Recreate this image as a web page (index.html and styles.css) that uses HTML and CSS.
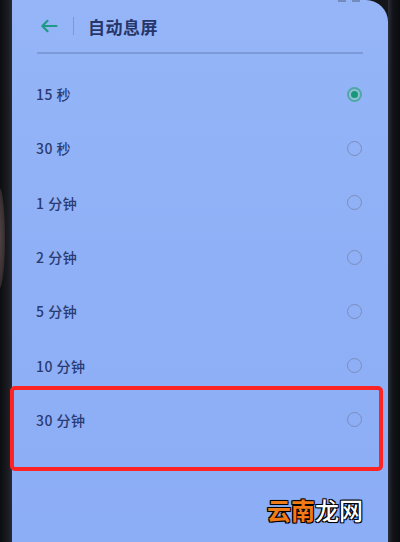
FILE: index.html
```html
<!DOCTYPE html>
<html lang="zh">
<head>
<meta charset="utf-8">
<link rel="stylesheet" href="styles.css">
</head>
<body>
<div class="device">
  <div class="bezel bezel-left"><div class="finger"></div></div>
  <div class="screen">
    <div class="statusbar"><span class="sb-dot"></span><span class="sb-dot"></span></div>
    <header class="header">
      <svg class="back" width="18" height="14" viewBox="0 0 18 14"><path d="M16.5 7H2.5M7.5 1.8L2.3 7l5.2 5.2" fill="none" stroke="#1f9a86" stroke-width="2.2" stroke-linecap="round" stroke-linejoin="round"/></svg>
      <span class="sep"></span>
      <h1 class="title">自动息屏</h1>
    </header>
    <div class="divider"></div>
    <ul class="list">
      <li class="row"><span class="label">15 秒</span><span class="radio checked"></span></li>
      <li class="row"><span class="label">30 秒</span><span class="radio"></span></li>
      <li class="row"><span class="label">1 分钟</span><span class="radio"></span></li>
      <li class="row"><span class="label">2 分钟</span><span class="radio"></span></li>
      <li class="row"><span class="label">5 分钟</span><span class="radio"></span></li>
      <li class="row"><span class="label">10 分钟</span><span class="radio"></span></li>
      <li class="row"><span class="label">30 分钟</span><span class="radio"></span></li>
    </ul>
  </div>
  <div class="bezel bezel-right"></div>
  <div class="highlight"></div>
  <div class="watermark"><span class="wm-orange">云南</span><span class="wm-white">龙网</span></div>
</div>
</body>
</html>
```
FILE: styles.css
```css
* { box-sizing: border-box; }
html, body { margin: 0; padding: 0; }
body {
  width: 400px;
  height: 542px;
  overflow: hidden;
  background: #15161a;
  font-family: "Noto Sans CJK SC", "Noto Sans", sans-serif;
}
.device {
  position: relative;
  display: flex;
  width: 400px;
  height: 542px;
}
.bezel { background: #141519; flex: none; position: relative; overflow: hidden; }
.bezel-left {
  width: 12px;
  background: linear-gradient(90deg, #0c0d10 0%, #1c1d22 70%, #2a2c34 100%);
}
.finger {
  position: absolute;
  left: -6px;
  top: 188px;
  width: 11px;
  height: 100px;
  border-radius: 50%;
  background: radial-gradient(ellipse at 30% 50%, #5a4a4a 0%, #3c3234 60%, #1c1d22 100%);
}
.bezel-right {
  width: 12px;
  background: linear-gradient(90deg, #2b2e3a 0%, #121318 40%, #0b0c0e 100%);
}
.screen {
  flex: 1;
  position: relative;
  background: linear-gradient(180deg, #95b5f8 0%, #8fb0f6 50%, #8caef6 100%);
  border-top-right-radius: 22px;
  overflow: hidden;
}
.statusbar {
  position: absolute;
  top: 0;
  right: 28px;
  display: flex;
  gap: 6px;
}
.sb-dot {
  width: 8px;
  height: 2px;
  background: #5e6f96;
  opacity: 0.6;
}
.header {
  height: 52px;
  display: flex;
  align-items: center;
  padding: 0 0 0 28px;
}
.back { flex: none; display: block; }
.sep {
  width: 1px;
  height: 18px;
  background: #7f97cc;
  margin: 0 14px 0 15px;
}
.title {
  margin: 0;
  font-size: 17px;
  font-weight: 700;
  color: #27366a;
  letter-spacing: 0.5px;
}
.divider {
  height: 2px;
  margin: 0 25px;
  background: #7e9ad8;
}
.list {
  list-style: none;
  margin: 0;
  padding: 13px 0 0 0;
}
.row {
  height: 54.3px;
  display: flex;
  align-items: center;
  justify-content: space-between;
  padding: 0 26px 0 24px;
}
.label {
  font-size: 14px;
  font-weight: 500;
  color: #2a3b72;
  letter-spacing: 0.5px;
}
.radio {
  width: 15px;
  height: 15px;
  border-radius: 50%;
  border: 1.5px solid #7a8dba;
  display: flex;
  align-items: center;
  justify-content: center;
}
.radio.checked {
  border: 2px solid #4ea9a6;
  background: #8fc0d6;
}
.radio.checked::after {
  content: "";
  width: 7px;
  height: 7px;
  border-radius: 50%;
  background: #17987a;
}
.highlight {
  position: absolute;
  left: 10px;
  top: 386px;
  width: 373px;
  height: 85px;
  border: 4px solid #ff2424;
  border-radius: 5px;
}
.watermark {
  position: absolute;
  left: 267px;
  top: 493px;
  font-size: 24px;
  font-weight: 700;
  line-height: 34px;
  font-family: "Noto Sans CJK SC", sans-serif;
}
.wm-orange {
  color: #f07a16;
  text-shadow: 0 0 2px #000, 1px 1px 0 #000, -1px -1px 0 #000, 1px -1px 0 #000, -1px 1px 0 #000;
}
.wm-white {
  color: #ffffff;
  font-weight: 500;
  text-shadow: 0 0 2px #000, 1px 1px 0 #000, -1px -1px 0 #000, 1px -1px 0 #000, -1px 1px 0 #000;
}
```
